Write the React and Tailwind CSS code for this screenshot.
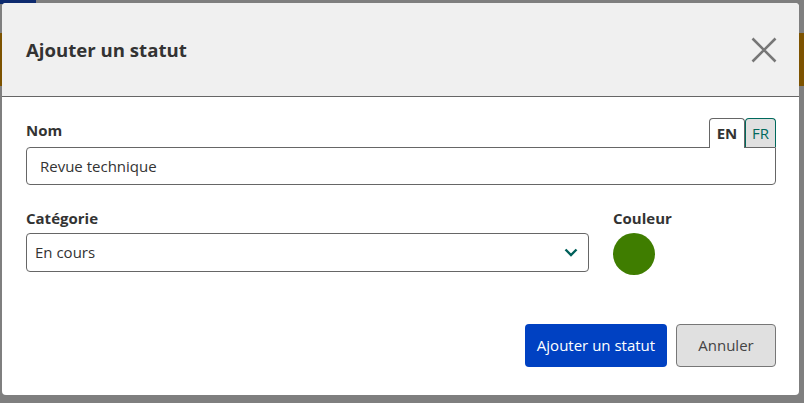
import React from "react";

export default function App() {
  return (
    <div
      className="relative w-[804px] h-[403px] overflow-hidden bg-[#7f7f7f]"
      style={{ fontFamily: '"Open Sans", "Liberation Sans", sans-serif' }}
    >
      {/* underlying page hints */}
      <div className="absolute left-0 top-0 w-[36px] h-[4px] bg-[#0d2a6e]" />
      <div className="absolute left-0 top-[33px] w-[804px] h-[53px] bg-[#7d5300]" />
      <div className="relative z-10 ml-[2px] mt-[3px] w-[797px] h-[392px] bg-white rounded-[4px] overflow-hidden flex flex-col">
        <div className="h-[94px] shrink-0 bg-[#f0f0f0] border-b border-[#666] flex items-center justify-between pl-[24px] pr-[22px]">
          <h2 className="text-[18.6px] font-bold text-[#333] mt-[1px]">Ajouter un statut</h2>
          <svg width="26" height="26" viewBox="0 0 26 26" className="mt-[1px]">
            <path d="M1.5 1.5 L24.5 24.5 M24.5 1.5 L1.5 24.5" stroke="#777" strokeWidth="2.6" fill="none" />
          </svg>
        </div>
        <div className="flex-1 flex flex-col pl-[24px] pr-[21px]">
          <div className="mt-[21px] flex items-end justify-between h-[29px]">
            <label className="text-[15px] font-bold text-[#333] mb-[6px]">Nom</label>
            <div className="flex h-[29px] mr-[2px]">
              <div className="w-[36px] h-[30px] bg-white border border-b-0 border-[#666] rounded-t-[4px] flex items-center justify-center text-[15px] font-bold text-[#333] relative z-10">
                EN
              </div>
              <div className="w-[31px] h-[29px] bg-[#e0e0e0] border border-b-0 border-[#00695c] rounded-t-[4px] flex items-center justify-center text-[15px] text-[#00695c]">
                FR
              </div>
            </div>
          </div>
          <div className="h-[38px] mr-[2px] border border-[#666] rounded-[4px] rounded-tr-none flex items-center pl-[13px] text-[15px] text-[#333]">
            Revue technique
          </div>
          <div className="mt-[23px] flex">
            <div className="w-[563px] flex flex-col">
              <label className="text-[15px] font-bold text-[#333] leading-[20px]">Catégorie</label>
              <div className="mt-[5px] h-[39px] border border-[#666] rounded-[4px] flex items-center justify-between pl-[8px] pr-[10px] text-[15px] text-[#333]">
                <span>En cours</span>
                <svg width="14" height="9" viewBox="0 0 14 9">
                  <path d="M1.5 1.5 L7 7 L12.5 1.5" stroke="#00605a" strokeWidth="2.4" fill="none" />
                </svg>
              </div>
            </div>
            <div className="ml-[24px] flex flex-col">
              <label className="text-[15px] font-bold text-[#333] leading-[20px]">Couleur</label>
              <div className="mt-[5px] w-[42px] h-[42px] rounded-full bg-[#3f7d00]" />
            </div>
          </div>
          <div className="mt-[49px] mr-[2px] flex justify-end gap-[9px]">
            <button className="h-[43px] w-[142px] bg-[#0041c2] text-white text-[15px] rounded-[4px]">
              Ajouter un statut
            </button>
            <button className="h-[43px] w-[100px] bg-[#e0e0e0] border border-[#777] text-[#444] text-[15px] rounded-[4px]">
              Annuler
            </button>
          </div>
        </div>
      </div>
    </div>
  );
}
